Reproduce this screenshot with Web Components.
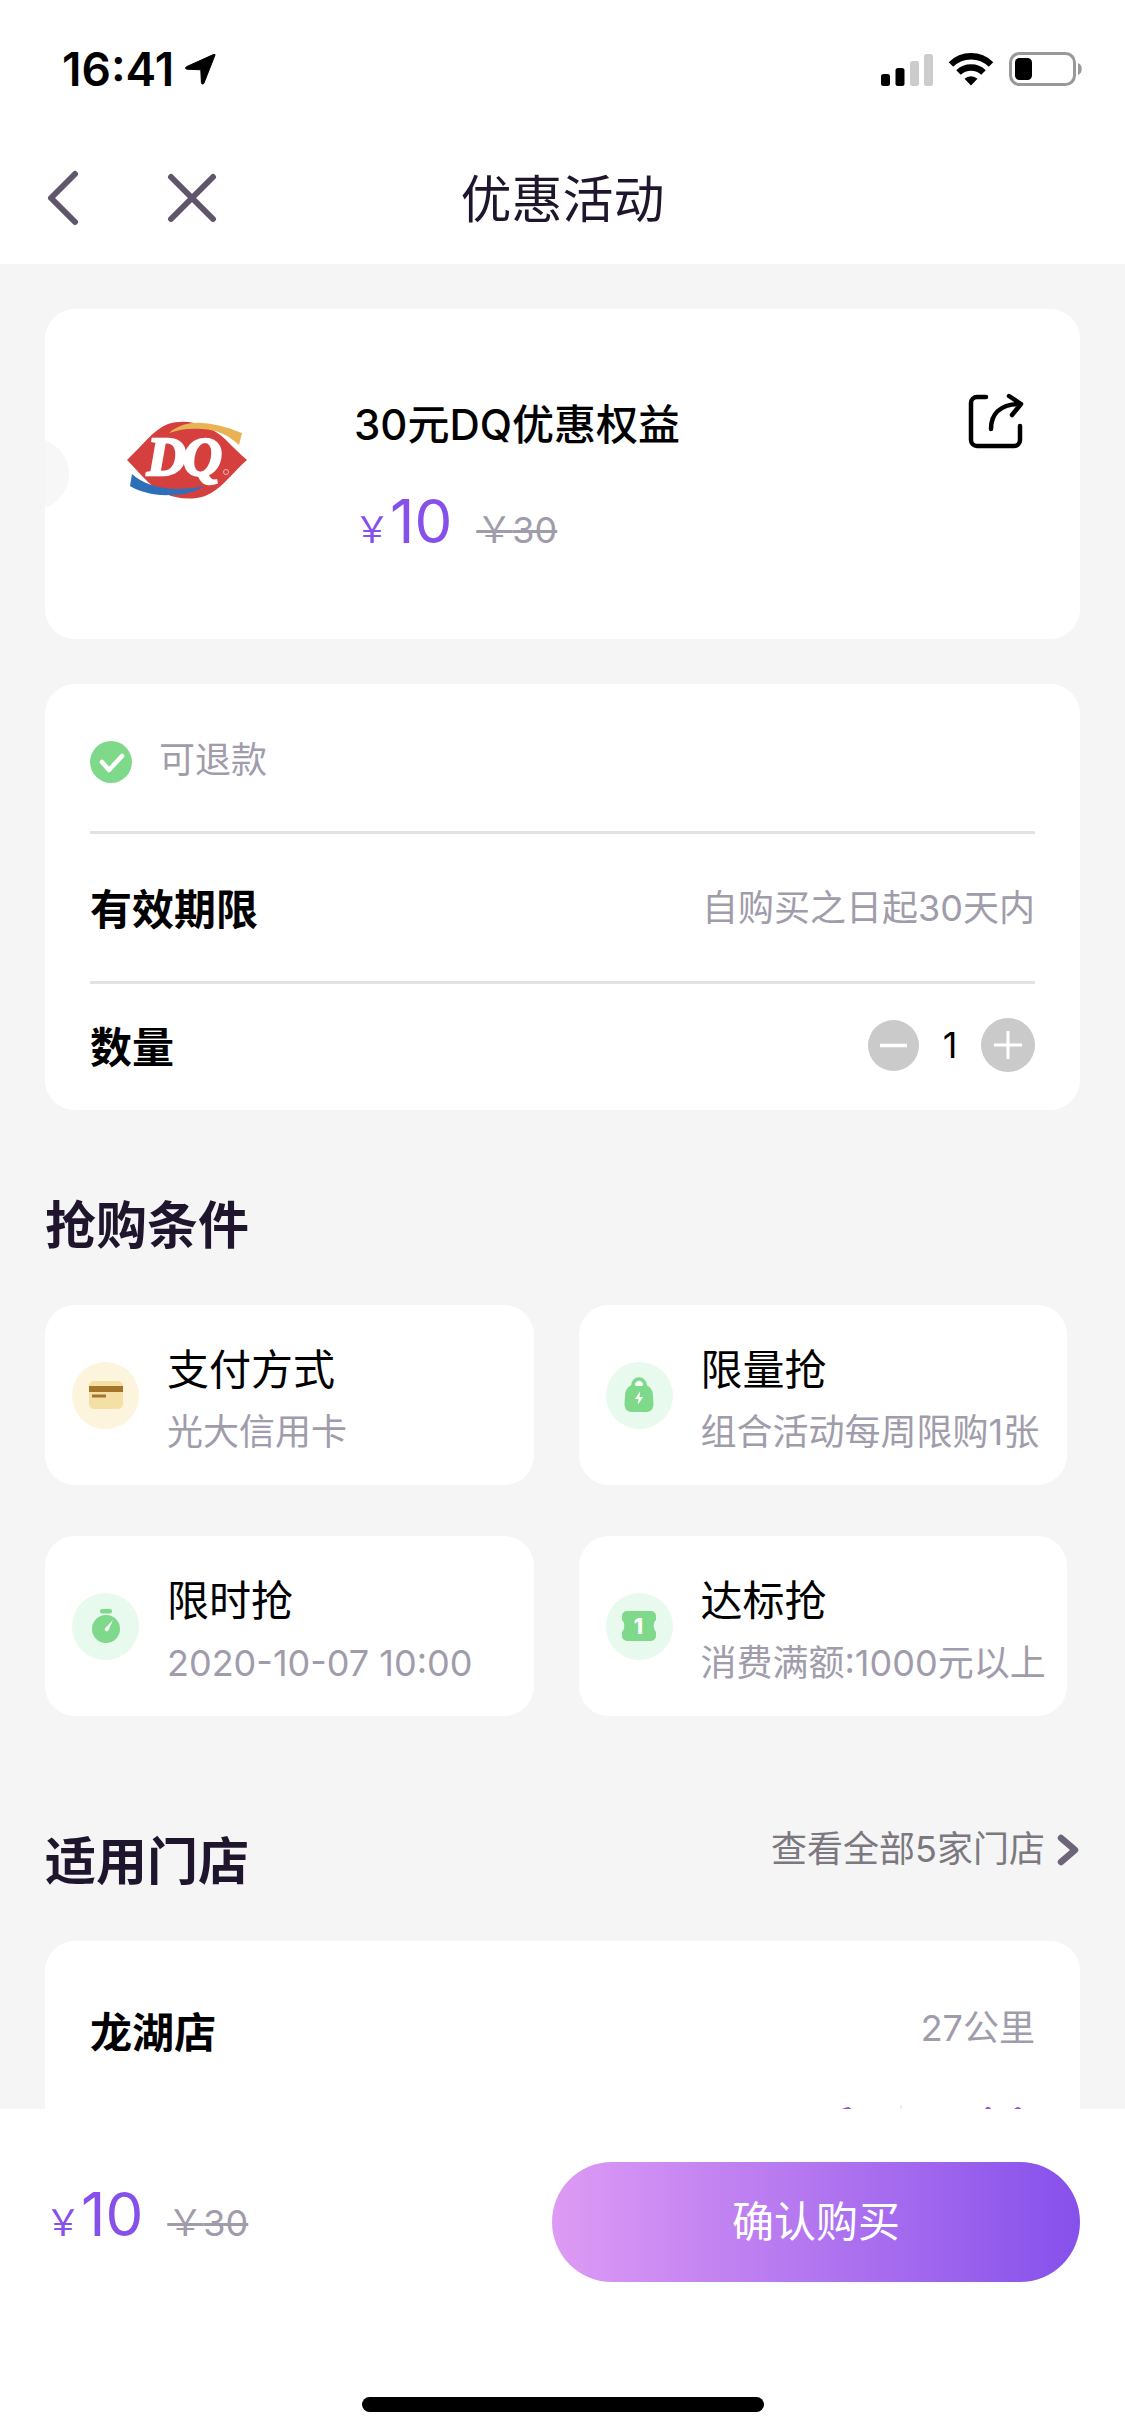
<!DOCTYPE html>
<html lang="zh-CN">
<head>
<meta charset="utf-8">
<meta name="viewport" content="width=device-width">
<title>优惠活动</title>
<style>
  html, body { height: 100%; margin: 0; }
  body {
    font-family: Inter, "Noto Sans CJK SC", sans-serif;
    font-size: 36px;
    line-height: 54px;
    color: #000;
    --page: #f5f5f5;
    --ink: #1f162d;
    --muted: #a09cab;
    --accent: #8650eb;
    --gutter: 45px;
    --radius: 30px;
  }
</style>
</head>
<body>
<offer-page></offer-page>
<script>
const define = (name, markup, setup) => {
  const template = document.createElement('template');
  template.innerHTML = markup;
  customElements.define(name, class extends HTMLElement {
    constructor() {
      super();
      this.attachShadow({ mode: 'open' }).append(template.content.cloneNode(true));
      if (setup) setup(this.shadowRoot);
    }
  });
};

define('status-bar', `
  <style>
    :host { display: flex; justify-content: space-between; align-items: center; height: 54px; padding: 42px 42px 36px 62px; }
    .time { display: flex; align-items: center; gap: 11px; font-size: 46px; font-weight: 600; }
    .signs { display: flex; align-items: center; gap: 15px; }
    svg { display: block; }
  </style>
  <span class="time">16:41
    <svg width="31" height="31" viewBox="0 0 31 31"><path d="M30 1 19 29c-.6 1.600-2.500 1.400-2.600-.4L15.800 15.800 2 15.200C.2 15 0 13.400 1.500 12.700L28.300.6c1.200-.5 2.100-.3 1.700.4z" stroke="#000"/></svg>
  </span>
  <span class="signs">
    <svg width="52" height="33" viewBox="0 0 52 33"><rect y="21" width="9" height="12" rx="2.500"/><rect x="14.500" y="15" width="9" height="18" rx="2.500"/><g fill="#ccc"><rect x="29" y="8" width="9" height="25" rx="2.500"/><rect x="43" y="1" width="9" height="32" rx="2.500"/></g></svg>
    <svg width="46" height="34" viewBox="0 0 46 34"><g fill="none" stroke="#000" stroke-width="6.500"><path d="M3 12.500a28.500 28.500 0 0 1 40 0"/><path d="M10.500 20.500a18 18 0 0 1 25 0"/></g><path d="M16.500 26.800a9.500 9.500 0 0 1 13 0L23 33.500z"/></svg>
    <svg width="74" height="36" viewBox="0 0 74 36"><rect x="1.500" y="2.500" width="64" height="31" rx="9" fill="none" stroke="#999" stroke-width="3"/><rect x="6" y="7" width="17" height="22" rx="4.500"/><path d="M69 12c5 1.500 5 10.500 0 12z" fill="#999"/></svg>
  </span>`);

define('nav-bar', `
  <style>
    :host { display: grid; grid-template-columns: 1fr auto 1fr; align-items: center; height: 132px; }
    nav { display: flex; gap: 80px; padding-left: 39px; }
    button { all: unset; width: 48px; height: 60px; display: grid; place-items: center; cursor: pointer; }
    h1 { margin: 0; padding-top: 3px; font-size: 51px; font-weight: 400; line-height: 72px; color: var(--ink); }
    svg { fill: none; stroke: #60566c; stroke-width: 6; stroke-linecap: round; stroke-linejoin: round; }
  </style>
  <nav>
    <button type="button" aria-label="返回"><svg width="32" height="56" viewBox="0 0 32 56"><path d="M28 4 4 28l24 24"/></svg></button>
    <button type="button" aria-label="关闭"><svg width="50" height="50" viewBox="0 0 50 50"><path d="M4 4l42 42M46 4 4 46"/></svg></button>
  </nav>
  <h1><slot></slot></h1>`);

define('price-tag', `
  <style>
    :host { display: flex; align-items: baseline; line-height: 72px; }
    .now { color: var(--accent); }
    b { font-size: 60px; font-weight: 400; }
    s { margin-left: 24px; color: var(--muted); text-decoration-thickness: 3px; }
  </style>
  <span class="now">&#xFFE5;<b><slot></slot></b></span><s>&#xFFE5;<slot name="was"></slot></s>`);

define('dq-logo', `
  <style>:host { display: block; } svg { display: block; }</style>
  <svg width="122" height="80" viewBox="0 0 122 80" role="img" aria-label="DQ">
    <path d="M1 40C18 24 27 10 42 4c20-6 42 1 58 16 8 8 14 14 21 20-16 14-26 30-42 36-22 7-44-1-57-14C14 54 8 47 1 40z" fill="#d5403e"/>
    <path d="M118 12v17L90 9zM3 68V51l28 20z" fill="#fff"/>
    <path d="M43 13C53 4 66 2 76 3c16 1 30 6 40 10l-3 12C102 15 92 10 76 9 64 8 54 9 43 13z" fill="#e9b355"/>
    <path d="M6 54c10 9 24 14 43 15 12 0 22-1 30-3-10 6-21 9-34 9C29 76 14 72 4 66z" fill="#2d6fb9"/>
    <g font-family="'Liberation Serif',serif" font-size="54" font-weight="700" font-style="italic" fill="#fff" stroke="#fff" stroke-width="2.500">
      <text x="21" y="55">D</text><text x="57" y="55">Q</text>
    </g>
    <circle cx="100" cy="52" r="2.500" fill="none" stroke="#f2b3b2"/>
  </svg>`);

define('offer-card', `
  <style>
    :host { display: grid; grid-template-columns: 309px 1fr auto; height: 330px; box-sizing: border-box; background: #fff; border-radius: var(--radius); position: relative; overflow: hidden; }
    .notch { position: absolute; left: -48px; top: 129px; width: 72px; height: 72px; border-radius: 50%; background: #f7f7f7; }
    dq-logo { margin: 111px 0 0 81px; }
    h2 { margin: 84px 0 29px; font-size: 42px; line-height: 63px; font-weight: 500; }
    button { all: unset; margin: 84px 56px 0 0; width: 56px; height: 56px; cursor: pointer; }
    svg { display: block; fill: none; stroke: #000; stroke-width: 4.500; stroke-linecap: round; stroke-linejoin: round; }
  </style>
  <span class="notch"></span>
  <dq-logo></dq-logo>
  <div><h2><slot></slot></h2><slot name="price"></slot></div>
  <button type="button" aria-label="分享"><svg width="56" height="56" viewBox="0 0 56 56"><path d="M18 4H9a6 6 0 0 0-6 6v37a6 6 0 0 0 6 6h37a6 6 0 0 0 6-6V33"/><path d="M23 36C23 22 31 11 53 11M41 3l12 8-9 11"/></svg></button>`);

define('info-panel', `
  <style>
    :host { display: block; background: #fff; border-radius: var(--radius); padding: 0 var(--gutter) 4px; }
  </style><slot></slot>`);

define('info-row', `
  <style>
    :host { display: flex; align-items: center; justify-content: space-between; height: 147px; border-bottom: 3px solid #e2e2e2; color: var(--muted); }
    :host(:last-child) { height: 122px; border: 0; }
    ::slotted([slot=label]) { padding-top: 4px; font-size: 42px; line-height: 63px; font-weight: 600; color: #000; }
  </style><slot name="label"></slot><slot></slot>`);

define('refund-note', `
  <style>:host { display: flex; align-items: center; gap: 27px; padding-top: 4px; color: var(--muted); } svg { display: block; margin-top: 5px; }</style>
  <svg width="42" height="42" viewBox="0 0 42 42"><circle cx="21" cy="21" r="21" fill="#7fd98a"/><path d="M12 21l7 8 13-14" fill="none" stroke="#fff" stroke-width="4.500" stroke-linecap="round" stroke-linejoin="round"/></svg>
  <span><slot></slot></span>`);

define('qty-stepper', `
  <style>
    :host { display: flex; align-items: center; color: #000; }
    button { all: unset; cursor: pointer; } svg { display: block; }
    output { width: 62px; text-align: center; }
  </style>
  <button type="button" aria-label="减少"><svg width="51" height="51" viewBox="0 0 51 51"><circle cx="25.500" cy="25.500" r="25.500" fill="#cacaca"/><path d="M12 25.500h27" stroke="#fff" stroke-width="3.500"/></svg></button>
  <output>1</output>
  <button type="button" aria-label="增加"><svg width="54" height="54" viewBox="0 0 54 54"><circle cx="27" cy="27" r="27" fill="#cacaca"/><path d="M13 27h28M27 13v28" stroke="#fff" stroke-width="3"/></svg></button>`,
  root => {
    const [less, more] = root.querySelectorAll('button');
    const out = root.querySelector('output');
    less.onclick = () => { out.value = Math.max(1, +out.value - 1); };
    more.onclick = () => { out.value = +out.value + 1; };
  });

define('section-head', `
  <style>
    :host { display: flex; justify-content: space-between; height: 72px; }
    h2 { margin: 2px 0 0; font-size: 51px; line-height: 72px; font-weight: 600; color: var(--ink); }
  </style><h2><slot></slot></h2><slot name="more"></slot>`);

define('more-link', `
  <style>
    a { display: flex; align-items: center; gap: 12px; line-height: 51px; color: #7b7880; text-decoration: none; }
    svg { display: block; }
  </style>
  <a href="#stores"><slot></slot><svg width="23" height="32" viewBox="0 0 23 32"><path d="M4 4l14 12L4 28" fill="none" stroke="#6c6477" stroke-width="6.500" stroke-linecap="round" stroke-linejoin="round"/></svg></a>`);

define('condition-grid', `
  <style>:host { display: grid; grid-template-columns: 1fr 1fr; gap: 51px 45px; padding-right: 13px; }</style><slot></slot>`);

define('condition-tile', `
  <style>
    :host { display: flex; align-items: center; gap: 28px; height: 180px; padding-left: 27px; background: #fff; border-radius: var(--radius); white-space: nowrap; }
    .badge { flex: none; width: 67px; height: 67px; display: grid; place-items: center; border-radius: 50%; background: var(--tint, #e8f9ee); }
    h3 { margin: 0; font-size: 42px; line-height: 63px; font-weight: 400; }
    p { margin: 0; line-height: 63px; color: var(--muted); }
    .text { padding-top: 12px; }
  </style>
  <span class="badge"><slot name="icon"></slot></span>
  <div class="text"><h3><slot></slot></h3><p><slot name="detail"></slot></p></div>`);

define('store-card', `
  <style>
    :host { display: block; background: #fff; border-radius: var(--radius); padding: 60px var(--gutter) var(--gutter); }
    header { display: flex; justify-content: space-between; }
    h3 { margin: 0; font-size: 42px; line-height: 63px; font-weight: 600; }
    span { color: var(--muted); }
    .actions { display: flex; justify-content: flex-end; align-items: center; gap: 45px; padding-top: 38px; }
    .actions button { all: unset; cursor: pointer; }
    svg { display: block; fill: none; stroke: #9550e0; stroke-width: 6; stroke-linejoin: round; stroke-linecap: round; }
    i { width: 2px; height: 54px; background: #eee; }
  </style>
  <header><h3><slot></slot></h3><span><slot name="distance"></slot></span></header>
  <div class="actions">
    <button type="button" aria-label="导航"><svg width="48" height="60" viewBox="0 0 48 60"><path d="M41 8 8 19l14 8 8 15z"/></svg></button>
    <i></i>
    <button type="button" aria-label="电话"><svg width="88" height="60" viewBox="0 0 88 60"><path d="M41 8 33 24v26h46V16L71 8 62 14"/></svg></button>
  </div>`);

define('buy-bar', `
  <style>
    :host { display: block; background: #fff; }
    .row { display: flex; align-items: center; justify-content: space-between; padding: 53px 45px 0; }
    ::slotted(price-tag) { padding-bottom: 8px; }
    button { all: unset; flex: 0 0 51%; height: 120px; border-radius: 60px; text-align: center; font-size: 42px; line-height: 120px; color: #fff; background: linear-gradient(90deg, #de9bf4, #8650eb); cursor: pointer; }
    .home { width: 402px; height: 15px; margin: 115px auto 24px; border-radius: 8px; background: #000; }
  </style>
  <div class="row"><slot></slot><button type="button">确认购买</button></div>
  <div class="home"></div>`);

define('offer-page', `
  <style>
    :host { display: flex; flex-direction: column; height: 100%; background: #fff; }
    main { flex: 1; min-height: 0; overflow: hidden; background: var(--page); padding: var(--gutter) var(--gutter) 0; }
    info-panel { margin-top: 45px; }
    section-head { margin: 78px 0 45px; }
    .stores { margin-top: 108px; }
    svg { display: block; }
  </style>
  <status-bar></status-bar>
  <nav-bar>优惠活动</nav-bar>
  <main>
    <offer-card>30元DQ优惠权益<price-tag slot="price">10<span slot="was">30</span></price-tag></offer-card>
    <info-panel>
      <info-row><refund-note>可退款</refund-note></info-row>
      <info-row><span slot="label">有效期限</span>自购买之日起30天内</info-row>
      <info-row><span slot="label">数量</span><qty-stepper></qty-stepper></info-row>
    </info-panel>
    <section-head>抢购条件</section-head>
    <condition-grid>
      <condition-tile style="--tint:#fdf4dd">支付方式
        <svg slot="icon" width="34" height="28" viewBox="0 0 34 28"><rect width="34" height="28" rx="5" fill="#f4dfa4"/><path d="M0 5h34v6H0zM3 13.500h14v3H3z" fill="#a4742a"/></svg>
        <span slot="detail">光大信用卡</span></condition-tile>
      <condition-tile>限量抢
        <svg slot="icon" width="32" height="36" viewBox="0 0 32 36"><path d="M10 11V8a6 6 0 0 1 12 0v3" fill="none" stroke="#7fd98a" stroke-width="3.500"/><path d="M9 8h14c5 2 7 6 7 11l.500 8c0 5-3 8-7 8h-15c-4 0-7-3-7-8L2 19C2 14 4 10 9 8z" fill="#7fd98a"/><path d="M12.500 9a3.500 3.500 0 0 1 7 0z" fill="#fff"/><path d="M17 14.500l-5 7.500h3.500l-.500 5.500 5-7.500h-3.500z" fill="#fff"/></svg>
        <span slot="detail">组合活动每周限购1张</span></condition-tile>
      <condition-tile>限时抢
        <svg slot="icon" width="30" height="36" viewBox="0 0 30 36"><circle cx="15" cy="21" r="14" fill="#7fd98a"/><rect x="9" y="1" width="12" height="4.500" rx="2.200" fill="#7fd98a"/><path d="M22 12l-4.500 10c-1.500 2.500-4.500 1-3.500-1.500z" fill="#fff"/></svg>
        <span slot="detail">2020-10-07 10:00</span></condition-tile>
      <condition-tile>达标抢
        <svg slot="icon" width="36" height="30" viewBox="0 0 36 30"><path d="M6 0h24a5 5 0 0 1 5 5v4c-3 2-3 9 0 12v4a5 5 0 0 1-5 5H6a5 5 0 0 1-5-5v-4c3-3 3-10 0-12V5a5 5 0 0 1 5-5z" fill="#7fd98a"/><text x="17.500" y="23" text-anchor="middle" font-family="Inter" font-size="21" font-weight="800" fill="#fff">1</text></svg>
        <span slot="detail">消费满额:1000元以上</span></condition-tile>
    </condition-grid>
    <section-head class="stores">适用门店<more-link slot="more">查看全部5家门店</more-link></section-head>
    <store-card id="stores">龙湖店<span slot="distance">27公里</span></store-card>
  </main>
  <buy-bar><price-tag>10<span slot="was">30</span></price-tag></buy-bar>`);
</script>
</body>
</html>
